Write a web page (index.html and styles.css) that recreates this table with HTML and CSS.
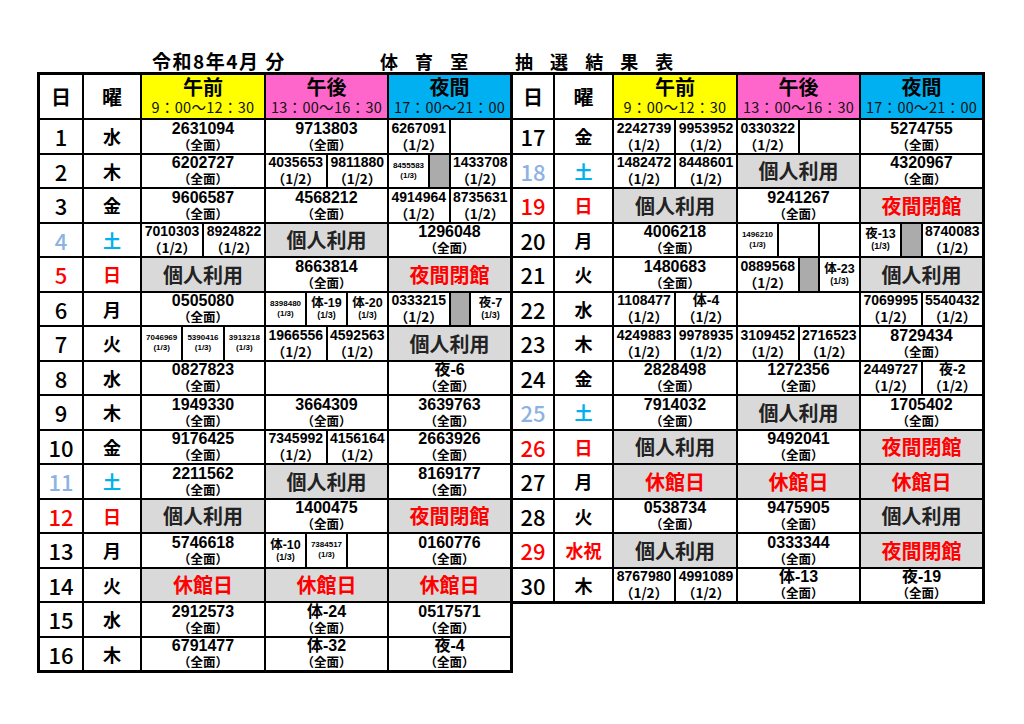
FILE: index.html
```html
<!DOCTYPE html>
<html lang="ja">
<head>
<meta charset="utf-8">
<title>令和8年4月分 体育室 抽選結果表</title>
<link rel="stylesheet" href="styles.css">
</head>
<body>
<div class="page">
  <div class="title">
    <span class="t1">令和8年4月 分</span>
    <span class="t2">体 育 室</span>
    <span class="t3">抽 選 結 果 表</span>
  </div>
  <div class="tables">
    <div class="grid left">
      <div class="hd">日</div><div class="hd">曜</div>
      <div class="hs am"><b>午前</b><span>9：00～12：30</span></div>
      <div class="hs pm"><b>午後</b><span>13：00～16：30</span></div>
      <div class="hs nt"><b>夜間</b><span>17：00～21：00</span></div>

      <div class="d">1</div><div class="w">水</div>
      <div class="f"><b>2631094</b><i>（全面）</i></div>
      <div class="f"><b>9713803</b><i>（全面）</i></div>
      <div class="sp"><div class="h"><b>6267091</b><i>（1/2）</i></div><div class="h"></div></div>

      <div class="d">2</div><div class="w">木</div>
      <div class="f"><b>6202727</b><i>（全面）</i></div>
      <div class="sp"><div class="h"><b>4035653</b><i>（1/2）</i></div><div class="h"><b>9811880</b><i>（1/2）</i></div></div>
      <div class="sp"><div class="t"><b>8455583</b><i>(1/3)</i></div><div class="x"></div><div class="h"><b>1433708</b><i>（1/2）</i></div></div>

      <div class="d">3</div><div class="w">金</div>
      <div class="f"><b>9606587</b><i>（全面）</i></div>
      <div class="f"><b>4568212</b><i>（全面）</i></div>
      <div class="sp"><div class="h"><b>4914964</b><i>（1/2）</i></div><div class="h"><b>8735631</b><i>（1/2）</i></div></div>

      <div class="d sat">4</div><div class="w sat">土</div>
      <div class="sp"><div class="h"><b>7010303</b><i>（1/2）</i></div><div class="h"><b>8924822</b><i>（1/2）</i></div></div>
      <div class="g">個人利用</div>
      <div class="f"><b>1296048</b><i>（全面）</i></div>

      <div class="d sun">5</div><div class="w sun">日</div>
      <div class="g">個人利用</div>
      <div class="f"><b>8663814</b><i>（全面）</i></div>
      <div class="g r">夜間閉館</div>

      <div class="d">6</div><div class="w">月</div>
      <div class="f"><b>0505080</b><i>（全面）</i></div>
      <div class="sp"><div class="t"><b>8398480</b><i>(1/3)</i></div><div class="t k"><b>体-19</b><i>(1/3)</i></div><div class="t k"><b>体-20</b><i>(1/3)</i></div></div>
      <div class="sp"><div class="h"><b>0333215</b><i>（1/2）</i></div><div class="x"></div><div class="t k"><b>夜-7</b><i>(1/3)</i></div></div>

      <div class="d">7</div><div class="w">火</div>
      <div class="sp"><div class="t"><b>7046969</b><i>(1/3)</i></div><div class="t"><b>5390416</b><i>(1/3)</i></div><div class="t"><b>3913218</b><i>(1/3)</i></div></div>
      <div class="sp"><div class="h"><b>1966556</b><i>（1/2）</i></div><div class="h"><b>4592563</b><i>（1/2）</i></div></div>
      <div class="g">個人利用</div>

      <div class="d">8</div><div class="w">水</div>
      <div class="f"><b>0827823</b><i>（全面）</i></div>
      <div class="e"></div>
      <div class="f"><b>夜-6</b><i>（全面）</i></div>

      <div class="d">9</div><div class="w">木</div>
      <div class="f"><b>1949330</b><i>（全面）</i></div>
      <div class="f"><b>3664309</b><i>（全面）</i></div>
      <div class="f"><b>3639763</b><i>（全面）</i></div>

      <div class="d">10</div><div class="w">金</div>
      <div class="f"><b>9176425</b><i>（全面）</i></div>
      <div class="sp"><div class="h"><b>7345992</b><i>（1/2）</i></div><div class="h"><b>4156164</b><i>（1/2）</i></div></div>
      <div class="f"><b>2663926</b><i>（全面）</i></div>

      <div class="d sat">11</div><div class="w sat">土</div>
      <div class="f"><b>2211562</b><i>（全面）</i></div>
      <div class="g">個人利用</div>
      <div class="f"><b>8169177</b><i>（全面）</i></div>

      <div class="d sun">12</div><div class="w sun">日</div>
      <div class="g">個人利用</div>
      <div class="f"><b>1400475</b><i>（全面）</i></div>
      <div class="g r">夜間閉館</div>

      <div class="d">13</div><div class="w">月</div>
      <div class="f"><b>5746618</b><i>（全面）</i></div>
      <div class="sp"><div class="t k"><b>体-10</b><i>(1/3)</i></div><div class="t"><b>7384517</b><i>(1/3)</i></div><div class="t"></div></div>
      <div class="f"><b>0160776</b><i>（全面）</i></div>

      <div class="d">14</div><div class="w">火</div>
      <div class="g r">休館日</div>
      <div class="g r">休館日</div>
      <div class="g r">休館日</div>

      <div class="d">15</div><div class="w">水</div>
      <div class="f"><b>2912573</b><i>（全面）</i></div>
      <div class="f"><b>体-24</b><i>（全面）</i></div>
      <div class="f"><b>0517571</b><i>（全面）</i></div>

      <div class="d">16</div><div class="w">木</div>
      <div class="f"><b>6791477</b><i>（全面）</i></div>
      <div class="f"><b>体-32</b><i>（全面）</i></div>
      <div class="f"><b>夜-4</b><i>（全面）</i></div>
    </div>

    <div class="grid right">
      <div class="hd">日</div><div class="hd">曜</div>
      <div class="hs am"><b>午前</b><span>9：00～12：30</span></div>
      <div class="hs pm"><b>午後</b><span>13：00～16：30</span></div>
      <div class="hs nt"><b>夜間</b><span>17：00～21：00</span></div>

      <div class="d">17</div><div class="w">金</div>
      <div class="sp"><div class="h"><b>2242739</b><i>（1/2）</i></div><div class="h"><b>9953952</b><i>（1/2）</i></div></div>
      <div class="sp"><div class="h"><b>0330322</b><i>（1/2）</i></div><div class="h"></div></div>
      <div class="f"><b>5274755</b><i>（全面）</i></div>

      <div class="d sat">18</div><div class="w sat">土</div>
      <div class="sp"><div class="h"><b>1482472</b><i>（1/2）</i></div><div class="h"><b>8448601</b><i>（1/2）</i></div></div>
      <div class="g">個人利用</div>
      <div class="f"><b>4320967</b><i>（全面）</i></div>

      <div class="d sun">19</div><div class="w sun">日</div>
      <div class="g">個人利用</div>
      <div class="f"><b>9241267</b><i>（全面）</i></div>
      <div class="g r">夜間閉館</div>

      <div class="d">20</div><div class="w">月</div>
      <div class="f"><b>4006218</b><i>（全面）</i></div>
      <div class="sp"><div class="t"><b>1496210</b><i>(1/3)</i></div><div class="t"></div><div class="t"></div></div>
      <div class="sp"><div class="t k"><b>夜-13</b><i>(1/3)</i></div><div class="x"></div><div class="h"><b>8740083</b><i>（1/2）</i></div></div>

      <div class="d">21</div><div class="w">火</div>
      <div class="f"><b>1480683</b><i>（全面）</i></div>
      <div class="sp"><div class="h"><b>0889568</b><i>（1/2）</i></div><div class="x"></div><div class="t k"><b>体-23</b><i>(1/3)</i></div></div>
      <div class="g">個人利用</div>

      <div class="d">22</div><div class="w">水</div>
      <div class="sp"><div class="h"><b>1108477</b><i>（1/2）</i></div><div class="h"><b>体-4</b><i>（1/2）</i></div></div>
      <div class="e"></div>
      <div class="sp"><div class="h"><b>7069995</b><i>（1/2）</i></div><div class="h"><b>5540432</b><i>（1/2）</i></div></div>

      <div class="d">23</div><div class="w">木</div>
      <div class="sp"><div class="h"><b>4249883</b><i>（1/2）</i></div><div class="h"><b>9978935</b><i>（1/2）</i></div></div>
      <div class="sp"><div class="h"><b>3109452</b><i>（1/2）</i></div><div class="h"><b>2716523</b><i>（1/2）</i></div></div>
      <div class="f"><b>8729434</b><i>（全面）</i></div>

      <div class="d">24</div><div class="w">金</div>
      <div class="f"><b>2828498</b><i>（全面）</i></div>
      <div class="f"><b>1272356</b><i>（全面）</i></div>
      <div class="sp"><div class="h"><b>2449727</b><i>（1/2）</i></div><div class="h"><b>夜-2</b><i>（1/2）</i></div></div>

      <div class="d sat">25</div><div class="w sat">土</div>
      <div class="f"><b>7914032</b><i>（全面）</i></div>
      <div class="g">個人利用</div>
      <div class="f"><b>1705402</b><i>（全面）</i></div>

      <div class="d sun">26</div><div class="w sun">日</div>
      <div class="g">個人利用</div>
      <div class="f"><b>9492041</b><i>（全面）</i></div>
      <div class="g r">夜間閉館</div>

      <div class="d">27</div><div class="w">月</div>
      <div class="g r">休館日</div>
      <div class="g r">休館日</div>
      <div class="g r">休館日</div>

      <div class="d">28</div><div class="w">火</div>
      <div class="f"><b>0538734</b><i>（全面）</i></div>
      <div class="f"><b>9475905</b><i>（全面）</i></div>
      <div class="g">個人利用</div>

      <div class="d sun">29</div><div class="w sun">水祝</div>
      <div class="g">個人利用</div>
      <div class="f"><b>0333344</b><i>（全面）</i></div>
      <div class="g r">夜間閉館</div>

      <div class="d">30</div><div class="w">木</div>
      <div class="sp"><div class="h"><b>8767980</b><i>（1/2）</i></div><div class="h"><b>4991089</b><i>（1/2）</i></div></div>
      <div class="f"><b>体-13</b><i>（全面）</i></div>
      <div class="f"><b>夜-19</b><i>（全面）</i></div>
    </div>
  </div>
</div>
</body>
</html>
```

FILE: styles.css
```css
* { box-sizing: border-box; margin: 0; padding: 0; }
body { background: #fff; color: #000; font-family: "Noto Sans CJK JP", sans-serif; }
.page { width: 1024px; height: 724px; padding-left: 37px; }

.title { height: 72px; display: flex; align-items: flex-end; padding-left: 115px; font-size: 19px; font-weight: 700; line-height: 22px; }
.t1 { width: 228px; letter-spacing: 1.5px; }
.t2 { width: 135px; font-size: 18px; word-spacing: 13px; }
.t3 { font-size: 18px; word-spacing: 13px; }

.tables { display: flex; align-items: flex-start; }
.grid { display: grid; gap: 2px; padding: 3px; background: #000; }
.left { grid-template-columns: 42px 56px 122px 121px 121px; grid-template-rows: 43px repeat(16, 32.5px); }
.right { padding-left: 0; grid-template-columns: 40px 57px 122px 121px 121px; grid-template-rows: 43px repeat(14, 32.5px); }

.hd { background: #fff; display: flex; align-items: center; justify-content: center; font-size: 20px; font-weight: 700; }
.hs { display: flex; flex-direction: column; align-items: center; justify-content: flex-start; }
.hs b { font-size: 20px; line-height: 23px; font-weight: 700; }
.hs span { font-size: 14.5px; line-height: 18px; color: #111; white-space: nowrap; letter-spacing: 0.3px; }
.am { background: #ffff00; }
.pm { background: #ff66cc; }
.nt { background: #00b0f0; }

.d { background: #fff; display: flex; align-items: center; justify-content: center; font-size: 22px; font-weight: 500; }
.w { background: #fff; display: flex; align-items: center; justify-content: center; font-size: 18px; font-weight: 700; }
.d.sat { color: #8db3e2; }
.w.sat { color: #00b0f0; }
.sun { color: #ff0000; }

.f { background: #fff; display: flex; flex-direction: column; align-items: center; justify-content: center; }
.f b { font: 700 16px/16px "Liberation Sans", "Noto Sans CJK JP", sans-serif; }
.f i, .sp i { font-style: normal; }
.f i { font: 700 12.5px/15px "Noto Sans CJK JP", sans-serif; }

.g { background: #d9d9d9; display: flex; align-items: center; justify-content: center; font-size: 20px; font-weight: 700; color: #222; }
.g.r { color: #ff0000; }
.e { background: #fff; }

.sp { display: grid; grid-template-columns: repeat(6, 1fr); gap: 2px; background: #000; }
.sp > div { background: #fff; display: flex; flex-direction: column; align-items: center; justify-content: center; }
.sp > .x { background: #ababab; }
.h { grid-column: span 3; }
.t { grid-column: span 2; }
.h b { font: 700 14px/15px "Liberation Sans", "Noto Sans CJK JP", sans-serif; }
.h i { font: 700 13.5px/16px "Noto Sans CJK JP", sans-serif; }
.t b { font: 700 8px/10px "Liberation Sans", "Noto Sans CJK JP", sans-serif; }
.t i { font: 700 8px/10px "Liberation Sans", sans-serif; }
.t.k b { font-size: 12.5px; line-height: 14px; }
.t.k i { font-size: 9px; line-height: 11px; }
```
